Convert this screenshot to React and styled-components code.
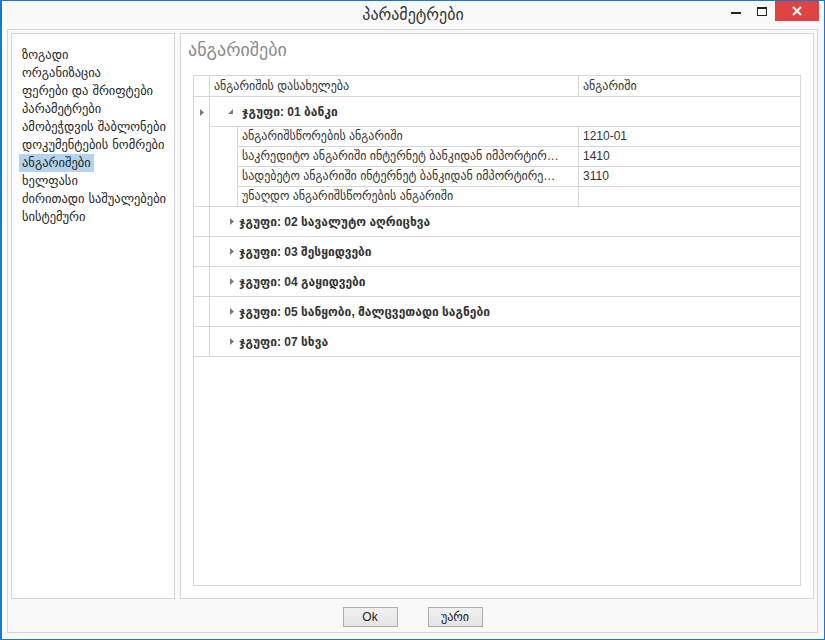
import React from 'react';
import styled, { createGlobalStyle } from 'styled-components';

const GlobalStyle = createGlobalStyle`
  html, body {
    margin: 0;
    padding: 0;
    background: #ffffff;
  }
  body {
    font-family: "Liberation Sans", "DejaVu Sans", sans-serif;
    font-size: 12px;
    color: #333333;
  }
`;

const Window = styled.div`
  box-sizing: border-box;
  width: 825px;
  height: 640px;
  border: 1px solid #1a78c8;
  border-left-width: 2px;
  background: #f9f9f9;
  display: flex;
  flex-direction: column;
`;

const TitleBar = styled.div`
  height: 28px;
  display: grid;
  grid-template-columns: 1fr auto 1fr;
  align-items: start;
`;

const Title = styled.div`
  grid-column: 2;
  font-family: "DejaVu Sans", sans-serif;
  font-size: 16px;
  line-height: 28px;
  color: #333333;
`;

const Controls = styled.div`
  grid-column: 3;
  justify-self: end;
  display: flex;
  align-items: flex-start;
  margin-right: 5px;
`;

const ControlButton = styled.div`
  width: ${(p) => p.$w || 26}px;
  height: 20px;
  display: flex;
  align-items: center;
  justify-content: center;
  background: ${(p) => (p.$close ? '#e04343' : 'transparent')};
`;

const Frame = styled.div`
  flex: 1;
  margin: 0 6px 6px 5px;
  border: 1px solid #d6d6d6;
  padding: 3px 3px 0 3px;
  display: flex;
  flex-direction: column;
`;

const Body = styled.div`
  flex: 1;
  display: flex;
  gap: 5px;
  min-height: 0;
`;

const NavPanel = styled.div`
  width: 164px;
  box-sizing: border-box;
  border: 1px solid #d6d6d6;
  background: #ffffff;
  padding: 12px 0 0 7px;
`;

const NavList = styled.div`
  display: flex;
  flex-direction: column;
  align-items: flex-start;
`;

const NavItem = styled.div`
  height: 18px;
  line-height: 18px;
  padding: 0 3px;
  font-family: "DejaVu Sans", sans-serif;
  font-size: 12.5px;
  color: #222222;
  white-space: nowrap;
  background: ${(p) => (p.$active ? '#b3d3ef' : 'transparent')};
`;

const ContentPanel = styled.div`
  flex: 1;
  box-sizing: border-box;
  border: 1px solid #d6d6d6;
  background: #ffffff;
  display: flex;
  flex-direction: column;
`;

const PanelHeader = styled.div`
  height: 41px;
  box-sizing: border-box;
  padding: 3px 7px 0;
  font-family: "DejaVu Sans", sans-serif;
  font-size: 18px;
  line-height: 26px;
  color: #8b8b8b;
`;

const Grid = styled.div`
  flex: 1;
  margin: 0 12px 12px;
  border: 1px solid #d6d6d6;
  display: flex;
  flex-direction: column;
`;

const Row = styled.div`
  display: flex;
  height: ${(p) => p.$h}px;
`;

const Indicator = styled.div`
  width: 15px;
  flex: none;
  border-right: 1px solid #d6d6d6;
  border-bottom: ${(p) => (p.$line ? '1px solid #d6d6d6' : 'none')};
  display: flex;
  align-items: center;
  justify-content: center;
`;

const Indent = styled.div`
  width: 27px;
  flex: none;
  border-right: 1px solid #d6d6d6;
  border-bottom: ${(p) => (p.$line ? '1px solid #d6d6d6' : 'none')};
`;

const Cell = styled.div`
  box-sizing: border-box;
  flex: ${(p) => (p.$w ? 'none' : '1')};
  width: ${(p) => (p.$w ? `${p.$w}px` : 'auto')};
  min-width: 0;
  border-bottom: 1px solid #d6d6d6;
  border-right: ${(p) => (p.$sep ? '1px solid #d6d6d6' : 'none')};
  padding: 0 4px;
  line-height: ${(p) => p.$lh || 19}px;
  font-family: "Liberation Sans", "DejaVu Sans", sans-serif;
  font-size: 12px;
  color: #333333;
  white-space: nowrap;
  overflow: hidden;
`;

const GroupCell = styled.div`
  flex: 1;
  border-bottom: 1px solid #d6d6d6;
  display: flex;
  align-items: center;
  padding-left: ${(p) => (p.$open ? 18 : 20)}px;
  gap: ${(p) => (p.$open ? 9 : 5)}px;
  font-family: "Liberation Sans", "DejaVu Sans", sans-serif;
  font-size: 12px;
  font-weight: bold;
  color: #333333;
  white-space: nowrap;
`;

const Footer = styled.div`
  height: 33px;
  display: flex;
  justify-content: center;
  gap: 30px;
  padding-top: 8px;
  box-sizing: border-box;
`;

const Button = styled.button`
  width: 55px;
  height: 20px;
  padding: 0;
  border: 1px solid #acacac;
  background: linear-gradient(#f0f0f0, #e5e5e5);
  font-family: "Liberation Sans", "DejaVu Sans", sans-serif;
  font-size: 12px;
  color: #222222;
`;

const Collapsed = () => (
  <svg width="4" height="7" viewBox="0 0 4 7">
    <path d="M0 0 L4 3.5 L0 7 Z" fill="#7a7a7a" />
  </svg>
);

const Expanded = () => (
  <svg width="5" height="5" viewBox="0 0 5 5">
    <path d="M5 0 L5 5 L0 5 Z" fill="#7a7a7a" />
  </svg>
);

const navItems = [
  'ზოგადი',
  'ორგანიზაცია',
  'ფერები და შრიფტები',
  'პარამეტრები',
  'ამობეჭდვის შაბლონები',
  'დოკუმენტების ნომრები',
  'ანგარიშები',
  'ხელფასი',
  'ძირითადი საშუალებები',
  'სისტემური',
];

const groups = [
  {
    title: 'ჯგუფი: 01 ბანკი',
    open: true,
    rows: [
      ['ანგარიშსწორების ანგარიში', '1210-01'],
      ['საკრედიტო ანგარიში ინტერნეტ ბანკიდან იმპორტირ…', '1410'],
      ['სადებეტო ანგარიში ინტერნეტ ბანკიდან იმპორტირე…', '3110'],
      ['უნაღდო ანგარიშსწორების ანგარიში', ''],
    ],
  },
  { title: 'ჯგუფი: 02 სავალუტო აღრიცხვა' },
  { title: 'ჯგუფი: 03 შესყიდვები' },
  { title: 'ჯგუფი: 04 გაყიდვები' },
  { title: 'ჯგუფი: 05 სანყობი, მალცვეთადი საგნები' },
  { title: 'ჯგუფი: 07 სხვა' },
];

const App = () => {
  return (
    <>
      <GlobalStyle />
      <Window>
        <TitleBar>
          <Title>პარამეტრები</Title>
          <Controls>
            <ControlButton>
              <svg width="10" height="10" viewBox="0 0 10 10">
                <rect x="0" y="6" width="10" height="2" fill="#222" />
              </svg>
            </ControlButton>
            <ControlButton>
              <svg width="10" height="9" viewBox="0 0 10 9">
                <rect x="0.5" y="0.5" width="9" height="8" fill="none" stroke="#222" />
                <rect x="0" y="0" width="10" height="2" fill="#222" />
              </svg>
            </ControlButton>
            <ControlButton $close $w={44}>
              <svg width="10" height="10" viewBox="0 0 10 10">
                <path d="M1 1 L9 9 M9 1 L1 9" stroke="#fff" strokeWidth="2" />
              </svg>
            </ControlButton>
          </Controls>
        </TitleBar>
        <Frame>
          <Body>
            <NavPanel>
              <NavList>
                {navItems.map((item) => (
                  <NavItem key={item} $active={item === 'ანგარიშები'}>
                    {item}
                  </NavItem>
                ))}
              </NavList>
            </NavPanel>
            <ContentPanel>
              <PanelHeader>ანგარიშები</PanelHeader>
              <Grid>
                <Row $h={21}>
                  <Indicator $line />
                  <Cell $w={369} $sep $lh={20}>
                    ანგარიშის დასახელება
                  </Cell>
                  <Cell $lh={20}>ანგარიში</Cell>
                </Row>
                {groups.map((g, gi) => (
                  <React.Fragment key={g.title}>
                    <Row $h={30}>
                      <Indicator $line={!g.open}>{gi === 0 && <Collapsed />}</Indicator>
                      <GroupCell $open={g.open}>
                        {g.open ? <Expanded /> : <Collapsed />}
                        {g.title}
                      </GroupCell>
                    </Row>
                    {g.open &&
                      g.rows.map(([name, acc], ri) => {
                        const last = ri === g.rows.length - 1;
                        return (
                          <Row $h={20} key={name}>
                            <Indicator $line={last} />
                            <Indent $line={last} />
                            <Cell $w={341} $sep>
                              {name}
                            </Cell>
                            <Cell>{acc}</Cell>
                          </Row>
                        );
                      })}
                  </React.Fragment>
                ))}
              </Grid>
            </ContentPanel>
          </Body>
          <Footer>
            <Button>Ok</Button>
            <Button>უარი</Button>
          </Footer>
        </Frame>
      </Window>
    </>
  );
};

export default App;
